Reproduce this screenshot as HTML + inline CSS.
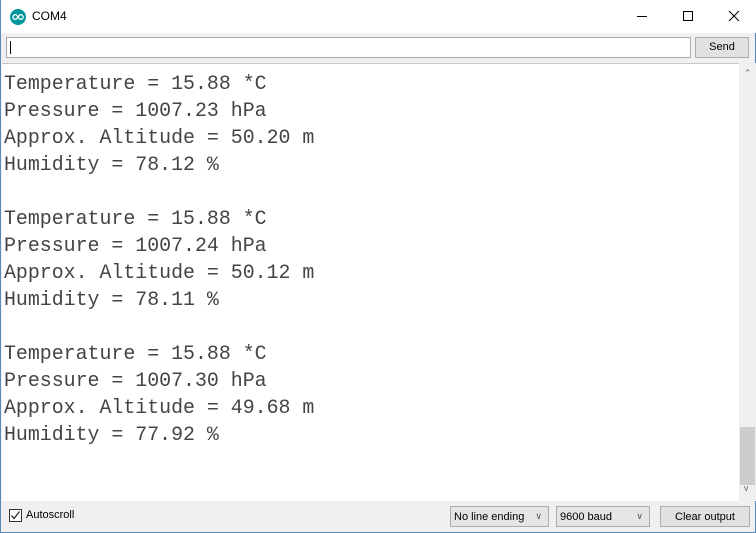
<!DOCTYPE html>
<html><head><style>
*{margin:0;padding:0;box-sizing:border-box}
body{width:756px;height:533px;overflow:hidden;background:#f0f0f0;font-family:"Liberation Sans",sans-serif;position:relative}
.win{position:absolute;left:0;top:0;width:756px;height:533px;border-left:1px solid #5a8ab8;border-right:1px solid #5a8ab8;border-bottom:1px solid #5a8ab8}
.title{position:absolute;left:0;top:0;width:756px;height:33px;background:#fff}
.title .t{position:absolute;left:31px;top:9px;font-size:12px;color:#000}
.ctl{position:absolute;top:0;height:32px;width:46px}
.inp{position:absolute;left:5px;top:37px;width:685px;height:21px;background:#fff;border:1px solid #a8a8a8}
.inp:before{content:"";position:absolute;left:3px;top:3px;width:1px;height:13px;background:#000}
.btn{position:absolute;background:#e1e1e1;border:1px solid #adadad;font-size:11px;text-align:center;color:#000}
.out{position:absolute;left:1px;top:63px;width:737px;height:438px;background:#fff;border-top:1px solid #c8c8c8}
pre{position:absolute;left:2px;top:6px;font-family:"Liberation Mono",monospace;font-size:19.9px;line-height:27px;color:#444}
.sb{position:absolute;left:738px;top:63px;width:17px;height:438px;background:#f0f0f0}
.thumb{position:absolute;left:1px;top:364px;width:15px;height:58px;background:#cdcdcd}
.sel{position:absolute;top:506px;height:21px;background:#e5e5e5;border:1px solid #acacac;font-size:11px;padding:4px 0 0 3px;color:#000}
.sel span{position:absolute;right:6px;top:4px;color:#555;font-size:9px}
</style></head><body>
<div class="win">
<div class="title">
<svg style="position:absolute;left:9px;top:9px" width="16" height="16" viewBox="0 0 16 16"><circle cx="8" cy="8" r="8" fill="#00979c"/><circle cx="5.2" cy="8" r="2.3" fill="none" stroke="#fff" stroke-width="1.3"/><circle cx="10.8" cy="8" r="2.3" fill="none" stroke="#fff" stroke-width="1.3"/></svg>
<div class="t">COM4</div>
<svg class="ctl" style="left:618px" viewBox="0 0 46 32"><line x1="18" y1="16.5" x2="28" y2="16.5" stroke="#000"/></svg>
<svg class="ctl" style="left:664px" viewBox="0 0 46 32"><rect x="18.5" y="11.5" width="9" height="9" fill="none" stroke="#000"/></svg>
<svg class="ctl" style="left:710px" viewBox="0 0 46 32"><path d="M18 11L28 21M28 11L18 21" stroke="#000"/></svg>
</div>
<div class="inp"></div>
<div class="btn" style="left:694px;top:37px;width:54px;height:21px;padding-top:3px">Send</div>
<div class="out"><pre>Temperature = 15.88 *C
Pressure = 1007.23 hPa
Approx. Altitude = 50.20 m
Humidity = 78.12 %

Temperature = 15.88 *C
Pressure = 1007.24 hPa
Approx. Altitude = 50.12 m
Humidity = 78.11 %

Temperature = 15.88 *C
Pressure = 1007.30 hPa
Approx. Altitude = 49.68 m
Humidity = 77.92 %</pre></div>
<div class="sb"><div style="position:absolute;left:5px;top:5px;font-size:9px;color:#666">&#8963;</div><div class="thumb"></div><div style="position:absolute;left:5px;top:420px;font-size:9px;color:#666">v</div></div>
<svg style="position:absolute;left:8px;top:509px" width="13" height="13"><rect x="0.5" y="0.5" width="12" height="12" fill="#fff" stroke="#333"/><path d="M2.5 6.5L5 9.5L10.5 2.5" fill="none" stroke="#222" stroke-width="1.2"/></svg>
<div style="position:absolute;left:25px;top:509px;font-size:11px">Autoscroll</div>
<div class="sel" style="left:449px;width:99px">No line ending<span>&#8744;</span></div>
<div class="sel" style="left:555px;width:94px">9600 baud<span>&#8744;</span></div>
<div class="btn" style="left:659px;top:506px;width:90px;height:21px;padding-top:4px">Clear output</div>
</div>
</body></html>
